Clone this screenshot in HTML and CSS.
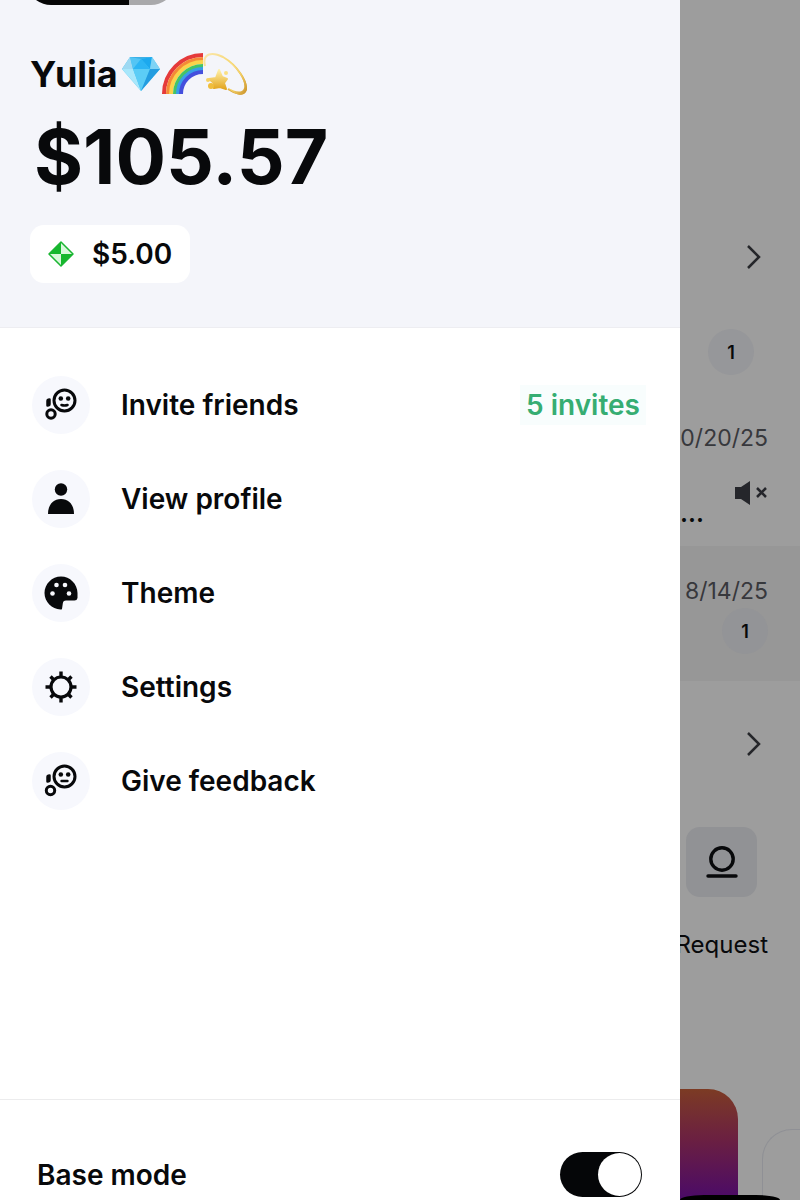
FILE: index.html
```
<!DOCTYPE html>
<html lang="en">

<head>
    <meta charset="UTF-8">
    <meta name="viewport" content="width=device-width, initial-scale=1.0">
    <title>Menu</title>
    <link rel="stylesheet" href="styles.css">
</head>

<body>
    <div class="screen">
        <div class="drawer">
            <header class="account">
                <svg class="avatar" width="130" height="5" viewBox="0 0 130 5">
                    <path d="M0 0Q7 5 15 5H93V0Z" fill="#050506" />
                    <path d="M93 0V5H115Q123 5 130 0Z" fill="#a9a9ab" />
                </svg>
                <div class="name">
                    <h1>Yulia</h1>
                    <svg class="emoji" width="126" height="44" viewBox="0 0 126 44">
                        <defs>
                            <linearGradient id="star" x1="0" y1="0" x2="0" y2="1">
                                <stop offset="0" stop-color="#fff0a8" />
                                <stop offset="1" stop-color="#e3a51f" />
                            </linearGradient>
                            <linearGradient id="ring" x1="0" y1="0" x2="1" y2="1">
                                <stop offset="0" stop-color="#fae7ad" />
                                <stop offset="0.5" stop-color="#f6d468" />
                                <stop offset="1" stop-color="#c99028" />
                            </linearGradient>
                        </defs>
                        <!-- gem -->
                        <path d="M9 5H31L39 17L20 39L1 17Z" fill="#48c1f3" />
                        <path d="M9 5L12 17H1Z" fill="#9ed9f2" />
                        <path d="M9 5L20 7L12 17Z" fill="#54c5f4" />
                        <path d="M9 5H31L20 7Z" fill="#3cb0e6" />
                        <path d="M31 5L29 17L20 7Z" fill="#1ca9ee" />
                        <path d="M31 5L39 17H29Z" fill="#7ed3f5" />
                        <path d="M20 7L29 17H12Z" fill="#2cb5f4" />
                        <path d="M1 17H12L20 39Z" fill="#a8e7fb" />
                        <path d="M12 17H29L20 39Z" fill="#5ccdf6" />
                        <path d="M29 17H39L20 39Z" fill="#249de0" />
                        <!-- rainbow -->
                        <g fill="none" stroke-width="4">
                            <path d="M43 42A39 39 0 0 1 82 3" stroke="#e53a3a" />
                            <path d="M47 42A35 35 0 0 1 82 7" stroke="#f58a36" />
                            <path d="M50 42A32 32 0 0 1 82 10" stroke="#fad34b" />
                            <path d="M54 42A28 28 0 0 1 82 14" stroke="#45c465" />
                            <path d="M57 42A25 25 0 0 1 82 17" stroke="#389ee9" />
                            <path d="M60 42A22 22 0 0 1 82 20" stroke="#444fdd" />
                        </g>
                        <!-- dizzy star -->
                        <path d="M84 14C81 2 90 -1 102 5C116 13 128 31 124 39C121 44 113 41 107 37" fill="none" stroke="url(#ring)" stroke-width="2" />
                        <path d="M107 9C121 20 126 34 122 38C119 41 113 39 107 36C114 43 123 46 126 38C127 29 118 16 107 9Z" fill="url(#ring)" />
                        <path d="M98 18L101 25L106 27L103 31L105 37L99 35L93 36L93 31L88 27L95 26Z" fill="url(#star)" stroke="url(#star)" stroke-width="2" stroke-linejoin="round" />
                        <circle cx="90" cy="34" r="3" fill="#f0bd3c" />
                        <circle cx="87" cy="28" r="2" fill="#f6d264" />
                        <circle cx="105" cy="21" r="2" fill="#f9df83" />
                    </svg>
                </div>
                <p class="balance">$105.57</p>
                <button class="cash" type="button">
                    <svg width="26" height="26" viewBox="0 0 26 26">
                        <path d="M13 1L25 13L13 25L1 13Z" fill="#d9f8dc" />
                        <path d="M13 1V13H1ZM13 25V13H25Z" fill="#16b72d" />
                        <path d="M13 1L25 13L13 25L1 13Z" fill="none" stroke="#1bb633" stroke-width="1.5" stroke-linejoin="round" />
                    </svg>
                    $5.00
                </button>
            </header>

            <nav class="menu">
                <a class="item" href="#invite">
                    <span class="icon">
                        <svg width="34" height="34" viewBox="0 0 34 34" fill="none" stroke="currentColor">
                            <circle cx="20.5" cy="12.5" r="10.5" stroke-width="3" />
                            <circle cx="7" cy="26" r="4.2" stroke-width="3" />
                            <path d="M3.5 13Q3.5 11.5 5.5 11.5V16Q5.5 17.5 3.5 17.5Z" stroke-width="2.5" stroke-linejoin="round" fill="currentColor" />
                            <path d="M17.5 17Q20.5 18 23.5 17" stroke-width="2.6" stroke-linecap="round" />
                            <circle cx="16.8" cy="10.5" r="2.3" fill="currentColor" stroke="none" />
                            <circle cx="24.2" cy="10.5" r="2.3" fill="currentColor" stroke="none" />
                        </svg>
                    </span>
                    <span class="label">Invite friends</span>
                    <span class="invites">5 invites</span>
                </a>
                <a class="item" href="#profile">
                    <span class="icon">
                        <svg width="34" height="34" viewBox="0 0 34 34" fill="currentColor">
                            <circle cx="17" cy="7.5" r="6.2" />
                            <path d="M4 32C4 23 9 17 17 17S30 23 30 32Z" />
                        </svg>
                    </span>
                    <span class="label">View profile</span>
                </a>
                <a class="item" href="#theme">
                    <span class="icon">
                        <svg width="34" height="34" viewBox="0 0 34 34">
                            <path d="M16.5 33.5C8 33 .5 26 .5 17C.5 8 8 .5 17 .5S33.500 8 33.5 17V22Q33 24.500 30.500 24.500H22Q19 24.500 18.800 27.500L18 33Q17.500 33.700 16.500 33.500Z" fill="currentColor" />
                            <g fill="#f7f8fd">
                                <circle cx="12.5" cy="9" r="2.3" />
                                <circle cx="21" cy="9" r="2.3" />
                                <circle cx="8.5" cy="17.5" r="2.3" />
                                <circle cx="25" cy="17.5" r="2.3" />
                            </g>
                        </svg>
                    </span>
                    <span class="label">Theme</span>
                </a>
                <a class="item" href="#settings">
                    <span class="icon">
                        <svg width="34" height="34" viewBox="0 0 34 34" fill="none" stroke="currentColor" stroke-width="3.4">
                            <circle cx="17" cy="17" r="10" stroke-width="3.2" />
                            <path d="M17 7V1.5M17 27V32.500M7 17H1.5M27 17H32.5M10 10L6.5 6.5M24 10L27.5 6.5M10 24L6.5 27.5M24 24L27.5 27.5" />
                        </svg>
                    </span>
                    <span class="label">Settings</span>
                </a>
                <a class="item" href="#feedback">
                    <span class="icon">
                        <svg width="34" height="34" viewBox="0 0 34 34" fill="none" stroke="currentColor">
                            <circle cx="20.5" cy="12.5" r="10.5" stroke-width="3" />
                            <circle cx="6.5" cy="26.5" r="4.2" stroke-width="3" />
                            <path d="M3.5 13Q3.5 11.5 5.5 11.5V16Q5.5 17.5 3.5 17.5Z" stroke-width="2.5" stroke-linejoin="round" fill="currentColor" />
                            <path d="M17.5 17H23.5" stroke-width="2.4" stroke-linecap="round" />
                            <circle cx="16.8" cy="10.5" r="2.3" fill="currentColor" stroke="none" />
                            <circle cx="24.2" cy="10.5" r="2.3" fill="currentColor" stroke="none" />
                        </svg>
                    </span>
                    <span class="label">Give feedback</span>
                </a>
            </nav>

            <footer class="mode">
                <label for="base-mode">Base mode</label>
                <input class="switch" type="checkbox" id="base-mode" checked>
            </footer>
        </div>

        <!-- dimmed page behind the drawer -->
        <main class="behind">
            <section class="chats">
                <svg class="chevron" width="16" height="26" viewBox="0 0 16 26">
                    <path d="M2 2L13 13L2 24" />
                </svg>
                <span class="badge first">1</span>
                <span class="date">0/20/25</span>
                <svg class="muted" width="34" height="24" viewBox="0 0 34 24">
                    <path d="M1 6H7L16 0V24L7 18H1Z" fill="#25262b" />
                    <path d="M23 7L32 16M32 7L23 16" stroke="#25262b" stroke-width="2.5" />
                </svg>
                <span class="preview">...</span>
            </section>
            <section class="selected">
                <span class="date">8/14/25</span>
                <span class="badge">1</span>
            </section>
            <section class="actions">
                <svg class="chevron" width="16" height="26" viewBox="0 0 16 26">
                    <path d="M2 2L13 13L2 24" />
                </svg>
                <button class="tile" type="button" aria-label="Request">
                    <svg width="34" height="34" viewBox="0 0 34 34" fill="none" stroke="#08090b" stroke-width="3.4" stroke-linecap="round">
                        <circle cx="17" cy="14" r="11.2" />
                        <path d="M3 31H31" />
                    </svg>
                </button>
                <span class="request">Request</span>
            </section>
            <section class="cards">
                <div class="card"></div>
                <div class="card-next"></div>
            </section>
            <div class="tabbar"></div>
        </main>
    </div>
</body>

</html>
```

FILE: styles.css
```
* {
    box-sizing: border-box;
}

body {
    margin: 0;
    font-family: Inter, "Liberation Sans", sans-serif;
    color: #08090b;
}

h1,
p {
    margin: 0;
}

button {
    border: 0;
    font-family: inherit;
    color: inherit;
}

svg {
    display: block;
    flex: none;
}

.screen {
    display: flex;
    height: 100vh;
    overflow: hidden;
    background: #9d9d9d;
}

/* drawer */
.drawer {
    display: flex;
    flex-direction: column;
    width: 85%;
    background: #fff;
}

.account {
    display: flex;
    flex-direction: column;
    align-items: flex-start;
    padding: 0 30px 44px;
    background: #f4f5fa;
    border-bottom: 1px solid #ededf1;
}

.avatar {
    margin-left: 6px;
}

.name {
    display: flex;
    align-items: center;
    gap: 3px;
    margin-top: 46px;
}

.name h1 {
    font-size: 36px;
    line-height: 46px;
    font-weight: 700;
}

.balance {
    padding: 0 4px;
    font-size: 75px;
    line-height: 92px;
    font-weight: 700;
    margin: 14px 0 22px;
}

.cash {
    display: flex;
    align-items: center;
    gap: 18px;
    height: 58px;
    padding: 0 18px;
    border-radius: 14px;
    background: #fff;
    font-size: 28px;
    font-weight: 600;
}

.menu {
    display: flex;
    flex: 1;
    flex-direction: column;
    gap: 36px;
    padding: 48px 34px 0 32px;
}

.item {
    display: flex;
    align-items: center;
    color: inherit;
    text-decoration: none;
    font-size: 28px;
    line-height: 36px;
    font-weight: 600;
}

.icon {
    display: flex;
    align-items: center;
    justify-content: center;
    width: 58px;
    height: 58px;
    margin-right: 31px;
    border-radius: 50%;
    background: #f7f8fd;
}

.invites {
    margin-left: auto;
    padding: 2px 6px;
    background: #f8fdfd;
    color: #36ad72;
}

.mode {
    display: flex;
    align-items: center;
    justify-content: space-between;
    padding: 52px 38px 3px 37px;
    border-top: 1px solid #ececed;
    font-size: 28px;
    font-weight: 600;
}

.switch {
    display: flex;
    appearance: none;
    justify-content: flex-end;
    width: 82px;
    height: 45px;
    margin: 0;
    padding: 1px;
    border-radius: 23px;
    background: #050608;
}

.switch::before {
    content: "";
    width: 43px;
    height: 43px;
    border-radius: 50%;
    background: #fff;
}

.switch:not(:checked) {
    justify-content: flex-start;
    background: #c5c6ca;
}

/* page behind */
.behind {
    position: relative;
    display: flex;
    flex: 1;
    flex-direction: column;
    min-width: 0;
    overflow: hidden;
}

.chats,
.selected,
.actions {
    display: flex;
    flex-direction: column;
    align-items: flex-end;
    padding: 0 32px;
}

.chats {
    height: 546px;
    padding-top: 244px;
}

.chevron {
    margin-right: 6px;
    fill: none;
    stroke: #25262a;
    stroke-width: 2.5;
}

.badge {
    display: flex;
    align-items: center;
    justify-content: center;
    width: 46px;
    height: 46px;
    border-radius: 50%;
    background: #96979a;
    font-size: 18px;
    font-weight: 600;
}

.first {
    margin: 59px 14px 48px 0;
}

.date {
    font-size: 23px;
    line-height: 30px;
    color: #37383c;
}

.muted {
    margin-top: 28px;
}

.preview {
    align-self: flex-start;
    margin-left: -32px;
    font-size: 25px;
    line-height: 16px;
    font-weight: 600;
}

.selected {
    height: 135px;
    padding-top: 30px;
    background: #979797;
}

.selected .badge {
    margin-top: 2px;
    background: #939497;
}

.actions {
    padding-top: 50px;
}

.tile {
    display: flex;
    align-items: center;
    justify-content: center;
    width: 71px;
    height: 70px;
    margin: 70px 11px 32px 0;
    padding: 0;
    border-radius: 14px;
    background: #919295;
}

.request {
    font-size: 24px;
    line-height: 32px;
}

.cards {
    display: flex;
    flex: 1;
    gap: 24px;
    margin-top: 128px;
}

.card {
    width: 58px;
    border-radius: 0 30px 0 0;
    background: linear-gradient(#7c3b24, #6b2041 45%, #4a0a68);
}

.card-next {
    flex: 1;
    margin-top: 40px;
    border: 1px solid #8f9095;
    border-width: 1px 0 0 1px;
    border-radius: 30px 0 0 0;
}

.tabbar {
    position: absolute;
    bottom: 0;
    left: 0;
    width: 100px;
    height: 5px;
    border-radius: 24px 24px 0 0 / 5px 5px 0 0;
    background: #000;
}
```
